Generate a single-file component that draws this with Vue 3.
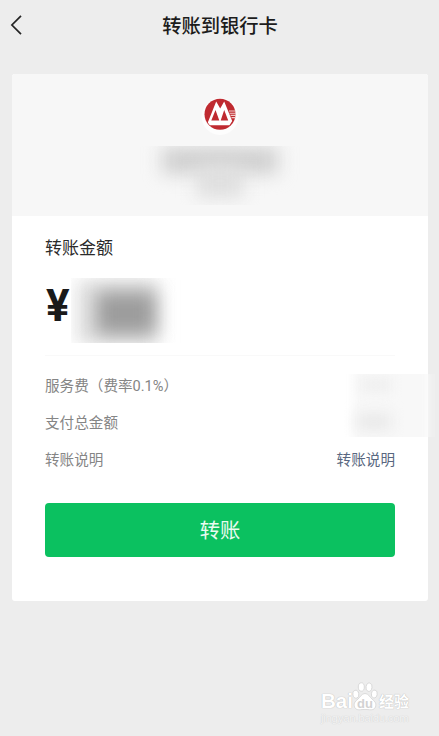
<script setup>
const fees = [
  { label: '服务费（费率0.1%）' },
  { label: '支付总金额' },
  { label: '转账说明', link: '转账说明' },
]
</script>

<template>
  <div class="page">
    <header class="bar">
      <svg class="back" width="14" height="22" viewBox="0 0 14 22">
        <path d="M11 1.8 1.900 11l9.100 9.200" fill="none" stroke="#242424" stroke-width="1.7" />
      </svg>
      <h1 class="title">转账到银行卡</h1>
    </header>

    <main class="card">
      <section class="payee">
        <svg class="logo" width="38" height="44" viewBox="0 0 38 44">
          <circle cx="19" cy="22.5" r="18.5" fill="#fdfdfd" />
          <circle cx="19" cy="20.2" r="15.5" fill="#bf2a30" />
          <path d="M6.8 28.5 15.2 7.5 19.2 14.5 23.2 7.500 31.2 27 28.5 31.300H8.8Z" fill="#fff" />
          <path d="M10.300 26.500 14.500 16 18.300 26.500ZM19.700 26.500 23.200 16 27.200 26.500Z" fill="#bf2a30" />
          <path d="M28 17h6.500M28.500 19.200h6.500M29.500 21.400h5.500M30.500 23.600h4" stroke="#f1cfcb" stroke-width="1.100" />
        </svg>
        <div class="mask mask-name"><i class="wide"></i><i class="narrow"></i></div>
      </section>

      <section class="body">
        <h2 class="caption">转账金额</h2>
        <div class="amount">
          <span class="yen">¥</span>
          <div class="mask mask-amount"><i class="soft"></i><i class="dark"></i></div>
        </div>
        <div class="rule"></div>
        <div class="fees">
          <div v-for="fee in fees" :key="fee.label" class="fee">
            <span>{{ fee.label }}</span>
            <a v-if="fee.link" class="link">{{ fee.link }}</a>
          </div>
          <div class="mask mask-fees"><i class="veil"></i><i class="one"></i><i class="two"></i></div>
        </div>
        <button class="submit">转账</button>
      </section>
    </main>

    <footer class="mark">
      <div class="brand">
        <span class="latin">Bai</span>
        <svg class="paw" width="26" height="29" viewBox="0 0 26 29">
          <g fill="#fff" stroke="#d3d3d3" stroke-width=".8">
            <ellipse cx="3.8" cy="12.2" rx="3" ry="4" transform="rotate(-12 3.8 12.2)" />
            <ellipse cx="9.3" cy="5" rx="3" ry="4.2" />
            <ellipse cx="17" cy="5.2" rx="3" ry="4.2" transform="rotate(10 17 5.2)" />
            <ellipse cx="22.3" cy="12" rx="2.9" ry="3.9" transform="rotate(12 22.3 12)" />
            <path d="M13 11.5c-3.5 0-4.5 3.5-7 5.5-2.500 2-4.500 4-3.800 7 .8 3.400 3.500 4.100 6.300 3.700 3-.4 6-.4 9 0 2.800.4 5.500-.3 6.300-3.700.7-3-1.300-5-3.800-7-2.500-2-3.500-5.500-7-5.500Z" />
          </g>
          <text x="13" y="26" text-anchor="middle" class="du">du</text>
        </svg>
        <span class="cjk">经验</span>
      </div>
      <div class="url">jingyan.baidu.com</div>
    </footer>
  </div>
</template>

<style>
body {
  background: #ededed;
}
</style>

<style scoped>
.page {
  display: flex;
  flex-direction: column;
  box-sizing: border-box;
  width: 439px;
  height: 736px;
  overflow: hidden;
  background: #ededed;
  font-family: Roboto, "Noto Sans CJK SC", sans-serif;
  color: #222;
}
.bar {
  display: grid;
  grid-template-columns: 30px 1fr 30px;
  align-items: center;
  height: 50px;
  margin-bottom: 24px;
  padding: 0 9px 0 10px;
}
.title {
  margin: 4px 0 0;
  text-align: center;
  font-size: 19.3px;
  line-height: 28px;
  font-weight: 500;
  color: #1c1c1c;
}
.card {
  width: 416px;
  height: 527px;
  margin-left: 12px;
  border-radius: 3px;
  background: #fff;
}
.payee {
  display: flex;
  flex-direction: column;
  align-items: center;
  box-sizing: border-box;
  height: 142px;
  padding-top: 20px;
  border-radius: 3px 3px 0 0;
  background: #f7f7f7;
}
.logo {
  flex: none;
}
.mask {
  position: relative;
  overflow: hidden;
}
.mask i {
  position: absolute;
}
.mask-name {
  width: 160px;
  height: 59px;
  margin-top: 8px;
}
.wide {
  left: 22px;
  top: 1px;
  width: 116px;
  height: 27px;
  background: #d0d0d0;
  filter: blur(9px);
}
.narrow {
  left: 57px;
  top: 18px;
  width: 46px;
  height: 34px;
  background: #dfdfdf;
  filter: blur(9px);
}
.body {
  padding: 0 33px;
}
.caption {
  margin: 0;
  padding-top: 19px;
  font-size: 17px;
  line-height: 26px;
  font-weight: 400;
  color: #2b2b2b;
}
.amount {
  display: flex;
  height: 65px;
  margin-top: 17px;
}
.yen {
  box-sizing: border-box;
  width: 26px;
  padding-left: 1px;
  font-size: 44px;
  line-height: 56px;
  font-weight: 700;
  color: #1a1a1a;
}
.mask-amount {
  width: 115px;
  height: 65px;
}
.soft {
  left: 6px;
  top: 2px;
  width: 82px;
  height: 64px;
  background: #dedede;
  filter: blur(9px);
}
.dark {
  left: 26px;
  top: 14px;
  width: 58px;
  height: 42px;
  background: #9c9c9c;
  filter: blur(9px);
}
.rule {
  height: 1px;
  margin-top: 12px;
  background: #f9f9f9;
}
.fees {
  position: relative;
  padding-top: 11px;
}
.fee {
  display: flex;
  justify-content: space-between;
  height: 37px;
  font-size: 14.6px;
  line-height: 38px;
  color: #858585;
}
.link {
  color: #596780;
}
.mask-fees {
  position: absolute;
  left: 294px;
  top: 18px;
  width: 100px;
  height: 63px;
}
.veil {
  left: 14px;
  top: -8px;
  width: 76px;
  height: 80px;
  background: #f8f8f8;
  filter: blur(5px);
}
.one {
  left: 22px;
  top: 4px;
  width: 30px;
  height: 14px;
  background: #efefef;
  filter: blur(6px);
}
.two {
  left: 18px;
  top: 39px;
  width: 34px;
  height: 17px;
  background: #e9e9e9;
  filter: blur(7px);
}
.submit {
  display: block;
  width: 100%;
  height: 54px;
  margin-top: 25px;
  padding: 3px 0 0;
  border: 0;
  border-radius: 4px;
  background: #0bc160;
  color: #e9fbf0;
  font: 400 20.3px/51px Roboto, "Noto Sans CJK SC", sans-serif;
}
.mark {
  display: flex;
  flex-direction: column;
  width: 100px;
  margin: 80px 0 0 321px;
  color: #fff;
}
.brand {
  display: flex;
  align-items: flex-end;
  height: 30px;
  text-shadow: 0 0 1px #b9b9b9, 0 0 1px #c8c8c8;
}
.latin {
  width: 31px;
  font: 700 20.5px/20px "Liberation Sans", sans-serif;
}
.paw {
  flex: none;
}
.du {
  font: 700 13px "Liberation Sans", sans-serif;
  fill: #d2d2d2;
  text-shadow: none;
}
.cjk {
  flex: none;
  margin-left: 1px;
  font-size: 15px;
  line-height: 18px;
  font-weight: 700;
}
.url {
  font: 11.5px/15px "Liberation Sans", sans-serif;
  letter-spacing: -0.3px;
  color: #f3f3f3;
  text-shadow: 0 0 1px #cfcfcf, 0 0 1px #dcdcdc;
}
</style>
